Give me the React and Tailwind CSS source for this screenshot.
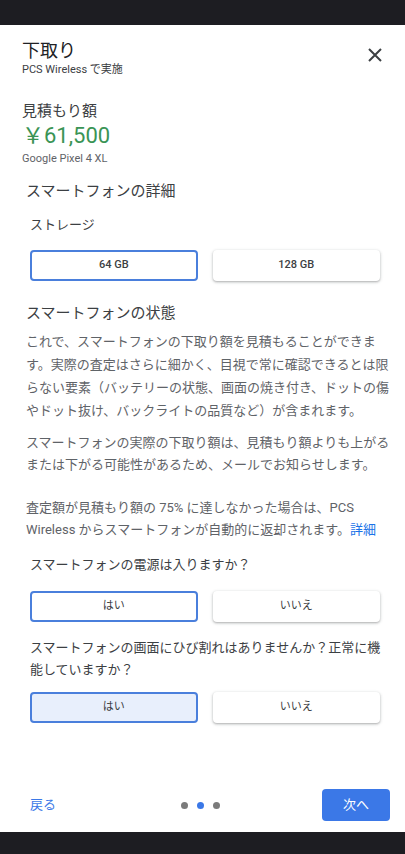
import React from "react";

const F = { fontFamily: "Roboto, 'Noto Sans CJK JP', sans-serif" };

function Choice({ label, selected, filled, bold }) {
  const base =
    "h-[31px] rounded-[4px] flex items-center justify-center text-[11px] text-[#3c4043]";
  if (selected) {
    return (
      <div
        className={`${base} border-2 border-[#4a7fdc] ${filled ? "bg-[#e8effc]" : "bg-white"} ${bold ? "font-medium" : ""}`}
      >
        {label}
      </div>
    );
  }
  return (
    <div
      className={`${base} bg-white shadow-[0_1px_2px_rgba(60,64,67,0.3),0_1px_3px_1px_rgba(60,64,67,0.12)] ${bold ? "font-medium" : ""}`}
    >
      {label}
    </div>
  );
}

export default function App() {
  return (
    <div style={F} className="w-[405px] h-[854px] flex flex-col bg-white overflow-hidden">
      <div className="h-[25px] bg-[#1d1d22] shrink-0" />
      <div className="flex-1 flex flex-col px-[22px] pr-[25px]">
        <div className="flex items-start justify-between pt-[14px]">
          <div>
            <div className="text-[18px] leading-[24px] text-[#202124]">下取り</div>
            <div className="text-[11px] leading-[14px] mt-[0px] text-[#3c4043]">PCS Wireless で実施</div>
          </div>
          <svg width="14" height="14" viewBox="0 0 14 14" className="mt-[9px] mr-[-2px]">
            <path d="M1 1 L13 13 M13 1 L1 13" stroke="#3c4043" strokeWidth="2" />
          </svg>
        </div>

        <div className="mt-[24px] text-[15px] leading-[20px] text-[#3c4043]">見積もり額</div>
        <div className="mt-[1px] text-[22px] leading-[28px] text-[#3a9455]">￥61,500</div>
        <div className="mt-[2px] text-[11px] leading-[14px] text-[#5f6368]">Google Pixel 4 XL</div>

        <div className="pl-[4px]">
          <div className="mt-[15px] text-[15px] leading-[20px] text-[#3c4043]">スマートフォンの詳細</div>
          <div className="pl-[4px]">
            <div className="mt-[15px] text-[13px] leading-[18px] text-[#3c4043]">ストレージ</div>
            <div className="mt-[16px] grid grid-cols-2 gap-[15px]">
              <Choice label="64 GB" selected bold />
              <Choice label="128 GB" bold />
            </div>
          </div>

          <div className="mt-[22px] text-[15px] leading-[20px] text-[#3c4043]">スマートフォンの状態</div>
          <div className="text-[13px] text-[#5f6368] whitespace-nowrap">
            <p className="mt-[7px] leading-[23px]">
              これで、スマートフォンの下取り額を見積もることができま<br />
              す。実際の査定はさらに細かく、目視で常に確認できるとは限<br />
              らない要素（バッテリーの状態、画面の焼き付き、ドットの傷<br />
              やドット抜け、バックライトの品質など）が含まれます。
            </p>
            <p className="mt-[10px] leading-[22px]">
              スマートフォンの実際の下取り額は、見積もり額よりも上がる<br />
              または下がる可能性があるため、メールでお知らせします。
            </p>
            <p className="mt-[21px] leading-[22px]">
              査定額が見積もり額の 75% に達しなかった場合は、PCS<br />
              Wireless からスマートフォンが自動的に返却されます。<span className="text-[#1a73e8]">詳細</span>
            </p>
          </div>

          <div className="pl-[4px]">
            <div className="mt-[15px] text-[13px] leading-[18px] text-[#3c4043]">スマートフォンの電源は入りますか？</div>
            <div className="mt-[17px] grid grid-cols-2 gap-[15px]">
              <Choice label="はい" selected />
              <Choice label="いいえ" />
            </div>
            <div className="mt-[15px] text-[13px] leading-[22px] text-[#3c4043] whitespace-nowrap">
              スマートフォンの画面にひび割れはありませんか？正常に機<br />
              能していますか？
            </div>
            <div className="mt-[11px] grid grid-cols-2 gap-[15px]">
              <Choice label="はい" selected filled />
              <Choice label="いいえ" />
            </div>
          </div>
        </div>
      </div>

      <div className="grid grid-cols-[1fr_auto_1fr] items-center pl-[10px] pr-[15px] pb-[11px]">
        <div className="pl-[20px] text-[13px] text-[#3b78e7]">戻る</div>
        <div className="flex items-center gap-[9px]">
          <span className="w-[7px] h-[7px] rounded-full bg-[#7b7b7b]" />
          <span className="w-[7px] h-[7px] rounded-full bg-[#3b78e7]" />
          <span className="w-[7px] h-[7px] rounded-full bg-[#7b7b7b]" />
        </div>
        <div className="flex justify-end">
          <div className="w-[68px] h-[32px] rounded-[4px] bg-[#3b78e7] text-white text-[13px] flex items-center justify-center">
            次へ
          </div>
        </div>
      </div>
      <div className="h-[22px] bg-[#1d1d22] shrink-0" />
    </div>
  );
}
